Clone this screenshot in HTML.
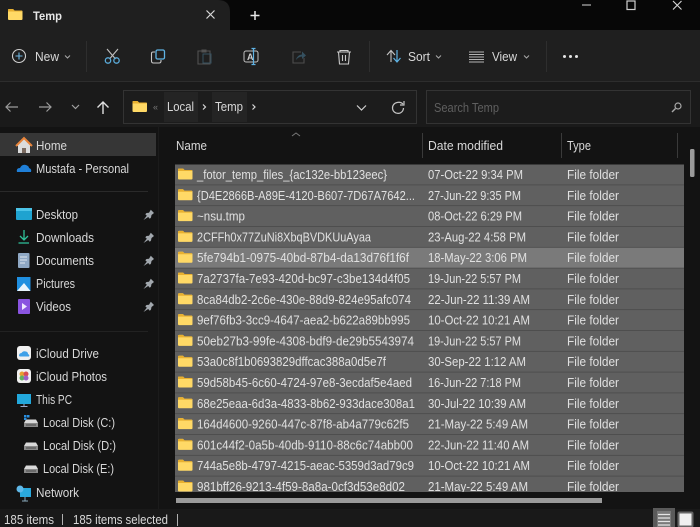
<!DOCTYPE html>
<html><head><meta charset="utf-8"><style>
html,body{margin:0;padding:0;width:700px;height:527px;overflow:hidden;background:#141414}
svg{display:block;filter:blur(.3px)}
text{font-family:"Liberation Sans",sans-serif;font-size:12.5px;fill:#d8d8d8}
.r text{fill:#e0e0e0}
.nav text{fill:#d8d8d8}
</style></head><body>
<svg width="700" height="527" viewBox="0 0 700 527" xmlns="http://www.w3.org/2000/svg">
<defs>
<g id="f"><path d="M0 1Q0 0 1 0H5L6.500 1.500H13.500Q14.500 1.500 14.500 2.500V10Q14.500 11 13.500 11H1Q0 11 0 10Z" fill="#ffd966"/><path d="M0 1Q0 0 1 0H5L6.500 1.500H14V2.500H0Z" fill="#e8b030"/></g>
<g id="pin"><path d="M0.500 11L3.800 6.800L2.300 5.300L3.500 4L6 3.700L7.800 0.800L11 4L8.500 6L8 8.500L6.800 9.700L5.200 8Z" fill="#a2a8ae"/></g>
<g id="disk"><path d="M2 2.500H12L14 6V10H0V6Z" fill="#d9d9d9"/><rect x="0" y="6" width="14" height="4" fill="#8a8a8a"/><rect x="2" y="7.500" width="10" height="1" fill="#4a4a4a"/></g>
</defs>

<!-- chrome backgrounds -->
<rect width="700" height="30" fill="#070707"/>
<path d="M0 30V0H218Q230 0 230 12V30Z" fill="#1f1f1f"/>
<rect y="30" width="700" height="51" fill="#1f1f1f"/>
<rect y="81" width="700" height="1.500" fill="#2d2d2d"/>
<rect y="82" width="700" height="45" fill="#1a1a1a"/>
<rect y="127" width="700" height="382" fill="#131313"/>
<rect y="509" width="700" height="18" fill="#191919"/>

<!-- tab -->
<use href="#f" transform="translate(8,9)"/>
<text x="33" y="20" style="font-weight:bold;font-size:11.500px;fill:#e6e6e6" textLength="29" lengthAdjust="spacingAndGlyphs">Temp</text>
<path d="M206.500 10.500L214.500 18.500M214.500 10.500L206.500 18.500" stroke="#d8d8d8" stroke-width="1.200"/>
<path d="M255 11V20M250.500 15.500H259.500" stroke="#e8e8e8" stroke-width="1.500"/>
<!-- window controls -->
<path d="M582 5H591" stroke="#9a9a9a" stroke-width="1.400"/>
<rect x="627" y="1" width="8" height="8.500" fill="none" stroke="#d0d0d0" stroke-width="1.200"/>
<path d="M673 1L681.500 9.500M681.500 1L673 9.500" stroke="#d8d8d8" stroke-width="1.100"/>

<!-- toolbar -->
<circle cx="19" cy="56" r="6.500" fill="none" stroke="#cfcfcf" stroke-width="1.100"/>
<path d="M19 52.500V59.500M15.500 56H22.500" stroke="#6fb5e0" stroke-width="1.100"/>
<text x="35" y="61" textLength="24" lengthAdjust="spacingAndGlyphs" style="font-size:13px">New</text>
<path d="M65 55.500L67.500 58L70 55.500" stroke="#a8a8a8" fill="none"/>
<rect x="86" y="41" width="1" height="31" fill="#2e2e2e"/>
<path d="M107 49L115.500 59M118 49L109.500 59" stroke="#c0c0c0" stroke-width="1.100"/>
<circle cx="108" cy="60.500" r="2.700" fill="none" stroke="#5aaad8" stroke-width="1.300"/>
<circle cx="116.500" cy="60.500" r="2.700" fill="none" stroke="#5aaad8" stroke-width="1.300"/>
<path d="M155 52H153Q151.500 52 151.500 53.500V61Q151.500 63 153.500 63H159Q161 63 161 61V60" fill="none" stroke="#c8c8c8" stroke-width="1.100"/>
<rect x="156" y="50" width="8.500" height="9" rx="1.500" fill="none" stroke="#5fb3e4" stroke-width="1.300"/>
<path d="M198 51H210V64H198Z" fill="none" stroke="#525252" stroke-width="1.100"/><rect x="201.500" y="49.500" width="5" height="3" fill="#525252"/><rect x="203" y="54" width="8" height="9" fill="none" stroke="#35505f"/>
<rect x="244" y="51" width="14" height="11" rx="2" fill="none" stroke="#c0c0c0" stroke-width="1"/>
<text x="247" y="60" style="font-size:9px;font-weight:bold;fill:#d0d0d0">A</text>
<path d="M253.500 48.500V64.500M251.500 48.500H255.500M251.500 64.500H255.500" stroke="#5fb3e4" stroke-width="1.200"/>
<path d="M301 52H293V63H304V58" fill="none" stroke="#4d4d4d" stroke-width="1.100"/><path d="M296 60Q297 55 302 54.500V51.500L306 55.500L302 59V56.500Q298 57 296 60Z" fill="#35505f"/>
<path d="M337 52H351M340 52V50.500H348V52M338.500 52L339.500 64H348.500L349.500 52M342.500 55V61M345.500 55V61" fill="none" stroke="#c8c8c8" stroke-width="1.100"/>
<rect x="369" y="41" width="1" height="31" fill="#2e2e2e"/>
<path d="M391 62V51M387 55L391 50.500L395 55" fill="none" stroke="#c4c4c4" stroke-width="1.100"/>
<path d="M397 50V62M393.500 58L397 62L400.500 58" fill="none" stroke="#5fb3e4" stroke-width="1.200"/>
<text x="408" y="61" textLength="22" lengthAdjust="spacingAndGlyphs" style="font-size:13px">Sort</text>
<path d="M436 55.500L438.500 58L441 55.500" stroke="#a8a8a8" fill="none"/>
<path d="M469 52H484M469 54.500H484M469 57H484M469 59.500H484M469 62H484" stroke="#b4b4b4" stroke-width="1"/>
<text x="492" y="61" textLength="25" lengthAdjust="spacingAndGlyphs" style="font-size:13px">View</text>
<path d="M524 55.500L526.500 58L529 55.500" stroke="#a8a8a8" fill="none"/>
<rect x="546" y="41" width="1" height="31" fill="#2e2e2e"/>
<circle cx="564.500" cy="56.500" r="1.500" fill="#e4e4e4"/><circle cx="570.500" cy="56.500" r="1.500" fill="#e4e4e4"/><circle cx="576.500" cy="56.500" r="1.500" fill="#e4e4e4"/>

<!-- nav buttons -->
<path d="M18 107H6M10.500 102.500L6 107L10.500 111.500" fill="none" stroke="#9c9c9c" stroke-width="1.200"/>
<path d="M39 107H51M46.500 102.500L51 107L46.500 111.500" fill="none" stroke="#9c9c9c" stroke-width="1.200"/>
<path d="M72 105L75.500 108.500L79 105" fill="none" stroke="#a0a0a0" stroke-width="1.200"/>
<path d="M103 114V102M97.500 107.500L103 102L108.500 107.500" fill="none" stroke="#e0e0e0" stroke-width="1.400"/>

<!-- address -->
<rect x="123.500" y="90.500" width="293" height="33" fill="#1c1c1c" stroke="#333"/>
<rect x="164" y="92" width="34" height="30" fill="#242424"/><rect x="212" y="92" width="35" height="30" fill="#242424"/>
<use href="#f" transform="translate(132.500,101)"/>
<text x="153" y="110" style="font-size:9px;fill:#777">«</text>
<text x="167" y="111" textLength="27" lengthAdjust="spacingAndGlyphs">Local</text>
<path d="M203 104.500L205.500 107L203 109.500" fill="none" stroke="#d8d8d8" stroke-width="1.200"/>
<text x="215" y="111" textLength="28" lengthAdjust="spacingAndGlyphs">Temp</text>
<path d="M252.500 104.500L255 107L252.500 109.500" fill="none" stroke="#d8d8d8" stroke-width="1.200"/>
<path d="M357 105.500L361.500 110L366 105.500" fill="none" stroke="#d0d0d0" stroke-width="1.200"/>
<path d="M403 104Q400.500 101.500 397 102.500A5.500 5.500 0 1 0 403.500 108" fill="none" stroke="#c4c4c4" stroke-width="1.200"/><path d="M404 101V105H400" fill="none" stroke="#c4c4c4" stroke-width="1.200"/>
<rect x="426.500" y="90.500" width="264" height="33" fill="#1c1c1c" stroke="#333"/>
<text x="434" y="112" textLength="65" lengthAdjust="spacingAndGlyphs" style="fill:#5f5f5f">Search Temp</text>
<circle cx="678" cy="106" r="3" fill="none" stroke="#a8a8a8" stroke-width="1.200"/><path d="M675.500 108.500L672 112" stroke="#a8a8a8" stroke-width="1.400"/>

<!-- nav pane -->
<rect x="0" y="133" width="156" height="23" fill="#363636"/>
<g class="nav">
<path d="M16 146L24 138L32 146L30 146V153H18V146Z" fill="#dcdcdc"/><path d="M16 146L24 138L32 146" fill="none" stroke="#e8843a" stroke-width="2"/><rect x="22" y="148" width="4" height="5" fill="#7a6a60"/>
<text x="36" y="150" textLength="31" lengthAdjust="spacingAndGlyphs">Home</text>
<path d="M17 172Q16 168 20 168Q22 164 26 165Q29 166 29 168Q32 169 31 172Z" fill="#1f7fd8"/>
<text x="36" y="173" textLength="93" lengthAdjust="spacingAndGlyphs">Mustafa - Personal</text>
<rect x="0" y="191" width="148" height="1" fill="#2a2a2a"/>
<rect x="16" y="208" width="16" height="12" rx="1" fill="#1fa3d0"/><rect x="16" y="208" width="16" height="3" fill="#4cc4e8"/>
<text x="36" y="219" textLength="42" lengthAdjust="spacingAndGlyphs">Desktop</text>
<path d="M24 230V240M20 236L24 240L28 236M18.500 243H29" fill="none" stroke="#2fc29a" stroke-width="1.300"/>
<text x="36" y="242" textLength="58" lengthAdjust="spacingAndGlyphs">Downloads</text>
<rect x="18" y="253" width="11.500" height="15" rx="1" fill="#8fa8c4"/><path d="M20 257H27M20 260H27M20 263H25" stroke="#dfe6ee"/>
<text x="36" y="265" textLength="58" lengthAdjust="spacingAndGlyphs">Documents</text>
<rect x="17" y="277" width="13.500" height="14" fill="#1f8fe0"/><path d="M17 291L24 283L30.500 291Z" fill="#e8f4fc"/>
<text x="36" y="288" textLength="39" lengthAdjust="spacingAndGlyphs">Pictures</text>
<rect x="18" y="299" width="12" height="15" rx="1" fill="#8a54e0"/><path d="M22 303L27 306.500L22 310Z" fill="#f0e8ff"/>
<text x="36" y="311" textLength="35" lengthAdjust="spacingAndGlyphs">Videos</text>
<use href="#pin" transform="translate(143,209)"/><use href="#pin" transform="translate(143,232)"/><use href="#pin" transform="translate(143,255)"/><use href="#pin" transform="translate(143,278)"/><use href="#pin" transform="translate(143,301)"/>
<rect x="0" y="331" width="148" height="1" fill="#222"/>

<rect x="17" y="346" width="14" height="14" rx="3" fill="#f0f0f0"/><path d="M19 356Q19 353 21.500 353Q23 350.500 26 351.500Q28 352 28 354Q30 355 29 356.500H20Z" fill="#3fa0e8"/>
<text x="36" y="358" textLength="63" lengthAdjust="spacingAndGlyphs">iCloud Drive</text>
<rect x="17" y="369" width="14" height="14" rx="3" fill="#f0f0f0"/><circle cx="22" cy="374" r="2.500" fill="#e8a030"/><circle cx="26" cy="374" r="2.500" fill="#d84a50"/><circle cx="22" cy="378" r="2.500" fill="#60b060"/><circle cx="26" cy="378" r="2.500" fill="#9a60c8"/>
<text x="36" y="381" textLength="71" lengthAdjust="spacingAndGlyphs">iCloud Photos</text>
<rect x="17" y="394" width="14" height="10" fill="#22a8dc"/><path d="M24 404V406M20.500 406.500H27.500" stroke="#9ac"/>
<text x="36" y="404" textLength="36" lengthAdjust="spacingAndGlyphs">This PC</text>
<use href="#disk" transform="translate(24,417)"/><rect x="24" y="415" width="2.500" height="2.500" fill="#2a8fe0"/><rect x="27" y="415" width="2.500" height="2.500" fill="#2a8fe0"/><rect x="24" y="418" width="2.500" height="2" fill="#2a8fe0"/>
<text x="43" y="427" textLength="72" lengthAdjust="spacingAndGlyphs">Local Disk (C:)</text>
<use href="#disk" transform="translate(24,440)"/>
<text x="43" y="450" textLength="73" lengthAdjust="spacingAndGlyphs">Local Disk (D:)</text>
<use href="#disk" transform="translate(24,463)"/>
<text x="43" y="473" textLength="71" lengthAdjust="spacingAndGlyphs">Local Disk (E:)</text>
<rect x="20" y="488" width="11" height="9" fill="#2aa8dc"/><circle cx="20" cy="489" r="3.500" fill="#5fb8e8"/><path d="M25 497V501M22 501H28" stroke="#8ab"/>
<text x="36" y="497" textLength="43" lengthAdjust="spacingAndGlyphs">Network</text>
</g>
<rect x="158" y="127" width="1" height="382" fill="#1b1b1b"/>

<!-- list header -->
<text x="176" y="150" textLength="31" lengthAdjust="spacingAndGlyphs">Name</text>
<path d="M292 136L296 133L300 136" fill="none" stroke="#777"/>
<rect x="422" y="133" width="1" height="25" fill="#3a3a3a"/>
<text x="428" y="150" textLength="75" lengthAdjust="spacingAndGlyphs">Date modified</text>
<rect x="561" y="133" width="1" height="25" fill="#3a3a3a"/>
<text x="567" y="150" textLength="24" lengthAdjust="spacingAndGlyphs">Type</text>
<rect x="677" y="133" width="1" height="25" fill="#3a3a3a"/>

<!-- rows -->
<clipPath id="c"><rect x="174" y="164" width="510" height="328"/></clipPath>
<g clip-path="url(#c)" class="r">
<rect x="175" y="164.500" width="509" height="333" fill="#4a4a4a"/>
<rect x="175" y="164.500" width="509" height="20" fill="#606060"/>
<rect x="175" y="185.300" width="509" height="20" fill="#606060"/>
<rect x="175" y="206.100" width="509" height="20" fill="#606060"/>
<rect x="175" y="226.900" width="509" height="20" fill="#606060"/>
<rect x="175" y="247.700" width="509" height="20" fill="#7a7a7a"/>
<rect x="175" y="268.500" width="509" height="20" fill="#606060"/>
<rect x="175" y="289.300" width="509" height="20" fill="#606060"/>
<rect x="175" y="310.100" width="509" height="20" fill="#606060"/>
<rect x="175" y="330.900" width="509" height="20" fill="#606060"/>
<rect x="175" y="351.700" width="509" height="20" fill="#606060"/>
<rect x="175" y="372.500" width="509" height="20" fill="#606060"/>
<rect x="175" y="393.300" width="509" height="20" fill="#606060"/>
<rect x="175" y="414.100" width="509" height="20" fill="#606060"/>
<rect x="175" y="434.900" width="509" height="20" fill="#606060"/>
<rect x="175" y="455.700" width="509" height="20" fill="#606060"/>
<rect x="175" y="476.500" width="509" height="20" fill="#606060"/>

<use href="#f" transform="translate(178,168.500)"/><use href="#f" transform="translate(178,189.300)"/><use href="#f" transform="translate(178,210.100)"/><use href="#f" transform="translate(178,230.900)"/><use href="#f" transform="translate(178,251.700)"/><use href="#f" transform="translate(178,272.500)"/><use href="#f" transform="translate(178,293.300)"/><use href="#f" transform="translate(178,314.100)"/><use href="#f" transform="translate(178,334.900)"/><use href="#f" transform="translate(178,355.700)"/><use href="#f" transform="translate(178,376.500)"/><use href="#f" transform="translate(178,397.300)"/><use href="#f" transform="translate(178,418.100)"/><use href="#f" transform="translate(178,438.900)"/><use href="#f" transform="translate(178,459.700)"/><use href="#f" transform="translate(178,480.500)"/>

<text x="197" y="179" textLength="190" lengthAdjust="spacingAndGlyphs">_fotor_temp_files_{ac132e-bb123eec}</text>
<text x="197" y="199.800" textLength="218" lengthAdjust="spacingAndGlyphs">{D4E2866B-A89E-4120-B607-7D67A7642...</text>
<text x="197" y="220.600" textLength="48" lengthAdjust="spacingAndGlyphs">~nsu.tmp</text>
<text x="197" y="241.400" textLength="174" lengthAdjust="spacingAndGlyphs">2CFFh0x77ZuNi8XbqBVDKUuAyaa</text>
<text x="197" y="262.200" textLength="212" lengthAdjust="spacingAndGlyphs">5fe794b1-0975-40bd-87b4-da13d76f1f6f</text>
<text x="197" y="283" textLength="213" lengthAdjust="spacingAndGlyphs">7a2737fa-7e93-420d-bc97-c3be134d4f05</text>
<text x="197" y="303.800" textLength="214" lengthAdjust="spacingAndGlyphs">8ca84db2-2c6e-430e-88d9-824e95afc074</text>
<text x="197" y="324.600" textLength="213" lengthAdjust="spacingAndGlyphs">9ef76fb3-3cc9-4647-aea2-b622a89bb995</text>
<text x="197" y="345.400" textLength="217" lengthAdjust="spacingAndGlyphs">50eb27b3-99fe-4308-bdf9-de29b5543974</text>
<text x="197" y="366.200" textLength="189" lengthAdjust="spacingAndGlyphs">53a0c8f1b0693829dffcac388a0d5e7f</text>
<text x="197" y="387" textLength="215" lengthAdjust="spacingAndGlyphs">59d58b45-6c60-4724-97e8-3ecdaf5e4aed</text>
<text x="197" y="407.800" textLength="218" lengthAdjust="spacingAndGlyphs">68e25eaa-6d3a-4833-8b62-933dace308a1</text>
<text x="197" y="428.600" textLength="212" lengthAdjust="spacingAndGlyphs">164d4600-9260-447c-87f8-ab4a779c62f5</text>
<text x="197" y="449.400" textLength="216" lengthAdjust="spacingAndGlyphs">601c44f2-0a5b-40db-9110-88c6c74abb00</text>
<text x="197" y="470.200" textLength="217" lengthAdjust="spacingAndGlyphs">744a5e8b-4797-4215-aeac-5359d3ad79c9</text>
<text x="197" y="491" textLength="208" lengthAdjust="spacingAndGlyphs">981bff26-9213-4f59-8a8a-0cf3d53e8d02</text>

<text x="428" y="179" textLength="95" lengthAdjust="spacingAndGlyphs">07-Oct-22 9:34 PM</text>
<text x="428" y="199.800" textLength="93" lengthAdjust="spacingAndGlyphs">27-Jun-22 9:35 PM</text>
<text x="428" y="220.600" textLength="94" lengthAdjust="spacingAndGlyphs">08-Oct-22 6:29 PM</text>
<text x="428" y="241.400" textLength="98" lengthAdjust="spacingAndGlyphs">23-Aug-22 4:58 PM</text>
<text x="428" y="262.200" textLength="99" lengthAdjust="spacingAndGlyphs">18-May-22 3:06 PM</text>
<text x="428" y="283" textLength="93" lengthAdjust="spacingAndGlyphs">19-Jun-22 5:57 PM</text>
<text x="428" y="303.800" textLength="102" lengthAdjust="spacingAndGlyphs">22-Jun-22 11:39 AM</text>
<text x="428" y="324.600" textLength="102" lengthAdjust="spacingAndGlyphs">10-Oct-22 10:21 AM</text>
<text x="428" y="345.400" textLength="93" lengthAdjust="spacingAndGlyphs">19-Jun-22 5:57 PM</text>
<text x="428" y="366.200" textLength="98" lengthAdjust="spacingAndGlyphs">30-Sep-22 1:12 AM</text>
<text x="428" y="387" textLength="93" lengthAdjust="spacingAndGlyphs">16-Jun-22 7:18 PM</text>
<text x="428" y="407.800" textLength="98" lengthAdjust="spacingAndGlyphs">30-Jul-22 10:39 AM</text>
<text x="428" y="428.600" textLength="100" lengthAdjust="spacingAndGlyphs">21-May-22 5:49 AM</text>
<text x="428" y="449.400" textLength="101" lengthAdjust="spacingAndGlyphs">22-Jun-22 11:40 AM</text>
<text x="428" y="470.200" textLength="102" lengthAdjust="spacingAndGlyphs">10-Oct-22 10:21 AM</text>
<text x="428" y="491" textLength="100" lengthAdjust="spacingAndGlyphs">21-May-22 5:49 AM</text>

<text x="567" y="179" textLength="52" lengthAdjust="spacingAndGlyphs">File folder</text>
<text x="567" y="199.800" textLength="52" lengthAdjust="spacingAndGlyphs">File folder</text>
<text x="567" y="220.600" textLength="52" lengthAdjust="spacingAndGlyphs">File folder</text>
<text x="567" y="241.400" textLength="52" lengthAdjust="spacingAndGlyphs">File folder</text>
<text x="567" y="262.200" textLength="52" lengthAdjust="spacingAndGlyphs">File folder</text>
<text x="567" y="283" textLength="52" lengthAdjust="spacingAndGlyphs">File folder</text>
<text x="567" y="303.800" textLength="52" lengthAdjust="spacingAndGlyphs">File folder</text>
<text x="567" y="324.600" textLength="52" lengthAdjust="spacingAndGlyphs">File folder</text>
<text x="567" y="345.400" textLength="52" lengthAdjust="spacingAndGlyphs">File folder</text>
<text x="567" y="366.200" textLength="52" lengthAdjust="spacingAndGlyphs">File folder</text>
<text x="567" y="387" textLength="52" lengthAdjust="spacingAndGlyphs">File folder</text>
<text x="567" y="407.800" textLength="52" lengthAdjust="spacingAndGlyphs">File folder</text>
<text x="567" y="428.600" textLength="52" lengthAdjust="spacingAndGlyphs">File folder</text>
<text x="567" y="449.400" textLength="52" lengthAdjust="spacingAndGlyphs">File folder</text>
<text x="567" y="470.200" textLength="52" lengthAdjust="spacingAndGlyphs">File folder</text>
<text x="567" y="491" textLength="52" lengthAdjust="spacingAndGlyphs">File folder</text>
</g>

<!-- scrollbars -->
<rect x="690" y="149" width="4.500" height="28" rx="1.500" fill="#9c9c9c"/>
<rect x="176" y="498" width="426" height="5" fill="#9a9a9a"/>

<!-- status bar -->
<text x="4" y="524" textLength="50" lengthAdjust="spacingAndGlyphs">185 items</text>
<rect x="62" y="514" width="1" height="11" fill="#b0b0b0"/>
<text x="73" y="524" textLength="95" lengthAdjust="spacingAndGlyphs">185 items selected</text>
<rect x="177" y="514" width="1" height="12" fill="#b0b0b0"/>
<rect x="653" y="508" width="22" height="19" fill="#5a5a5a"/>
<rect x="657" y="511" width="14" height="16" fill="#7a7a7a"/>
<path d="M658 514.500H670M658 518H670M658 521.500H670M658 525H670" stroke="#e4e4e4" stroke-width="1.300"/>
<rect x="678.500" y="512.500" width="14" height="14" rx="1" fill="#f0f0f0" stroke="#666" stroke-width="2"/>
</svg>
</body></html>
